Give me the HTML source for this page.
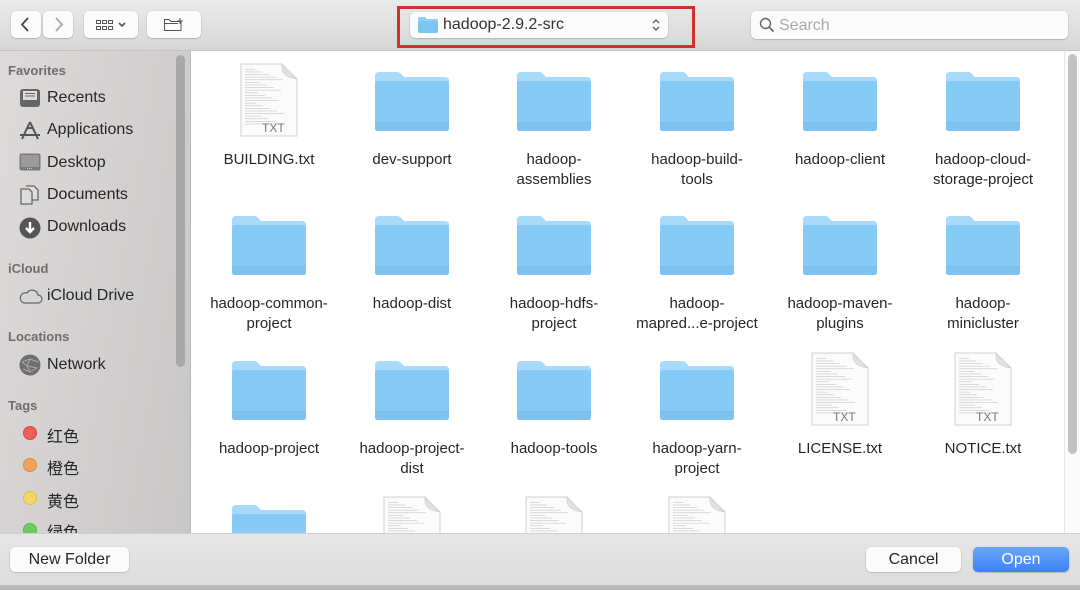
<!DOCTYPE html>
<html><head><meta charset="utf-8"><style>
*{margin:0;padding:0;box-sizing:border-box}
body{width:1080px;height:589px;overflow:hidden;position:relative;font-family:"Liberation Sans","Noto Sans CJK SC",sans-serif;background:#fff;color:#222}
.a{position:absolute}
#tb{left:0;top:0;width:1080px;height:51px;background:linear-gradient(#ebebeb,#d6d6d6);border-bottom:1px solid #c4c4c4}
.btn{position:absolute;background:#fbfbfb;border-radius:5px;box-shadow:0 0.5px 1.5px rgba(0,0,0,.3)}
#sb{left:0;top:51px;width:191px;height:482px;background:linear-gradient(100deg,#dddbda,#c9c7c6);border-right:1px solid #b8b8b8}
.sh{position:absolute;left:8px;font-size:13px;color:#6f6c6b;font-weight:bold}
.si{position:absolute;left:47px;font-size:16px;color:#262626}
.ic{position:absolute;left:19px}
#bb{left:0;top:533px;width:1080px;height:56px;background:linear-gradient(#e6e6e6,#dcdcdc);border-top:1px solid #cfcfcf}
.lbl{position:absolute;width:140px;text-align:center;font-size:15px;line-height:20px;color:#262626}
.dot{position:absolute;left:23px;width:14px;height:14px;border-radius:50%}
</style></head><body>
<div id="tb" class="a">
 <div class="btn" style="left:11px;top:11px;width:30px;height:27px"><svg width="30" height="27"><path d="M17 7 L11 13.5 L17 20" stroke="#444" stroke-width="1.8" fill="none"/></svg></div>
 <div class="btn" style="left:43px;top:11px;width:30px;height:27px"><svg width="30" height="27"><path d="M13 7 L19 13.5 L13 20" stroke="#aaa" stroke-width="1.8" fill="none"/></svg></div>
 <div class="btn" style="left:84px;top:11px;width:54px;height:27px"><svg width="54" height="27"><g fill="none" stroke="#555" stroke-width="1"><rect x="12.5" y="9.5" width="4" height="3"/><rect x="18.5" y="9.5" width="4" height="3"/><rect x="24.5" y="9.5" width="4" height="3"/><rect x="12.5" y="15.5" width="4" height="3"/><rect x="18.5" y="15.5" width="4" height="3"/><rect x="24.5" y="15.5" width="4" height="3"/><path d="M35 12 L38 15 L41 12" stroke-width="1.6"/></g></svg></div>
 <div class="btn" style="left:147px;top:11px;width:54px;height:27px"><svg width="54" height="27"><path d="M17.5 8.5 H22 L24 10.5 H34 V19.5 H17.5 Z M17.5 12.5 H31" stroke="#555" fill="none"/><path d="M33 7 V13 M30 10 H36" stroke="#555"/></svg></div>
 <div class="a" style="left:397px;top:6px;width:298px;height:42px;border:3px solid #d0312d"></div>
 <div class="btn" style="left:410px;top:12px;width:258px;height:26px">
  <svg class="a" style="left:8px;top:5px" width="20" height="16"><path d="M0 2 Q0 0 2 0 H7 L9 2 H18 Q20 2 20 4 V14 Q20 16 18 16 H2 Q0 16 0 14Z" fill="#8ecff5"/><rect x="0" y="4" width="20" height="12" rx="2" fill="#7cc4f2"/></svg>
  <span class="a" style="left:33px;top:4px;font-size:16px;color:#333">hadoop-2.9.2-src</span>
  <svg class="a" style="left:240px;top:5px" width="12" height="16"><path d="M3 6 L6 3 L9 6 M3 10 L6 13 L9 10" stroke="#555" fill="none" stroke-width="1.3"/></svg>
 </div>
 <div class="btn" style="left:751px;top:11px;width:317px;height:28px">
  <svg class="a" style="left:8px;top:6px" width="16" height="16"><circle cx="6.5" cy="6.5" r="5" stroke="#666" stroke-width="1.4" fill="none"/><path d="M10 10 L14.5 14.5" stroke="#666" stroke-width="1.6"/></svg>
  <span class="a" style="left:28px;top:6px;font-size:16px;color:#aaa">Search</span>
 </div>
</div>
<div id="sb" class="a">
 <div class="sh" style="top:12px">Favorites</div>
 <svg class="ic" style="top:37px" width="22" height="20"><rect x="1" y="1" width="20" height="18" rx="3" fill="#666"/><rect x="4" y="3" width="14" height="9" fill="#ddd"/><path d="M6 5.5H16M6 8H16" stroke="#666"/></svg><div class="si" style="top:38px">Recents</div>
 <svg class="ic" style="top:69px" width="22" height="22"><path d="M11 2 L3 19 M11 2 L19 19 M1 15 H21 M8 8 L14 8" stroke="#555" stroke-width="2" fill="none"/></svg><div class="si" style="top:70px">Applications</div>
 <svg class="ic" style="top:102px" width="22" height="19"><rect x="0.5" y="0.5" width="21" height="17" rx="2" fill="#7a7a7a"/><rect x="2" y="2" width="18" height="12" fill="#9a9a9a"/><path d="M8 15.5H14" stroke="#ccc" stroke-dasharray="1 1"/></svg><div class="si" style="top:103px">Desktop</div>
 <svg class="ic" style="top:133px" width="22" height="22"><path d="M2 5 H10 L13 8 V20 H2 Z M7 2 H15 L19 6 V16 H13" stroke="#666" fill="#ddd" stroke-width="1.3"/></svg><div class="si" style="top:135px">Documents</div>
 <svg class="ic" style="top:166px" width="22" height="22"><circle cx="11" cy="11" r="10.5" fill="#555"/><path d="M11 5 V15 M7 11 L11 15 L15 11" stroke="#fff" stroke-width="2.4" fill="none"/></svg><div class="si" style="top:167px">Downloads</div>
 <div class="sh" style="top:210px">iCloud</div>
 <svg class="ic" style="top:236px" width="24" height="18"><path d="M5 16 H19 A4 4 0 0 0 19 8 A6 6 0 0 0 8 6 A5 5 0 0 0 5 16Z" stroke="#666" fill="none" stroke-width="1.2"/></svg><div class="si" style="top:236px">iCloud Drive</div>
 <div class="sh" style="top:278px">Locations</div>
 <svg class="ic" style="top:303px" width="22" height="22"><circle cx="11" cy="11" r="10.5" fill="#6f6f6f"/><path d="M3 8 L11 5 L19 8 M4 15 L11 18 L18 14 M11 5 L8 12 L11 18 M8 12 L18 14 M8 12 L3 8" stroke="#aaa" fill="none"/></svg><div class="si" style="top:305px">Network</div>
 <div class="sh" style="top:347px">Tags</div>
 <div class="dot" style="top:375px;background:#ec6157;border:1px solid #d9473f"></div><div class="si" style="top:372px">红色</div>
 <div class="dot" style="top:407px;background:#f0a35a;border:1px solid #dc8c3e"></div><div class="si" style="top:404px">橙色</div>
 <div class="dot" style="top:440px;background:#f5d565;border:1px solid #e3bf46"></div><div class="si" style="top:437px">黄色</div>
 <div class="dot" style="top:472px;background:#6dcc5d;border:1px solid #55b846"></div><div class="si" style="top:468px">绿色</div>
 <div class="a" style="left:176px;top:4px;width:9px;height:312px;border-radius:5px;background:#a9a8a7"></div>
</div>
<div class="a" style="left:1064px;top:51px;width:16px;height:482px;background:#fafafa;border-left:1px solid #e6e6e6"><div class="a" style="left:3px;top:3px;width:9px;height:400px;border-radius:5px;background:#c2c2c2"></div></div>
<div id="grid"></div>
<div id="bb" class="a">
 <div class="btn" style="left:10px;top:13px;width:119px;height:25px;text-align:center;font-size:16px;line-height:25px;color:#262626">New Folder</div>
 <div class="btn" style="left:866px;top:13px;width:95px;height:25px;text-align:center;font-size:16px;line-height:25px;color:#262626">Cancel</div>
 <div class="btn" style="left:973px;top:13px;width:96px;height:25px;text-align:center;font-size:16px;line-height:25px;color:#fff;background:linear-gradient(#6aa6fb,#3b82f6)">Open</div>
 <div class="a" style="left:0;top:51px;width:1080px;height:5px;background:#b9b9b9"></div>
</div>
<script>
var F='<svg width="74" height="59"><path d="M0 4 Q0 0 4 0 H22 Q25 0 27 3 L29 5 H70 Q74 5 74 9 V55 Q74 59 70 59 H4 Q0 59 0 55Z" fill="#a8dafb"/><path d="M0 12 Q0 9 3 9 H71 Q74 9 74 12 V56 Q74 59 71 59 H3 Q0 59 0 56Z" fill="#85cbf6"/><rect x="0" y="50" width="74" height="1" fill="#78bdeb"/><path d="M0 51 H74 V56 Q74 59 71 59 H3 Q0 59 0 56Z" fill="#7ec2f0"/></svg>';
function D(){var l='';for(var i=0;i<22;i++){l+='<rect x="5" y="'+(6+i*2.6)+'" width="'+(10+((i*37)%30))+'" height="0.7" fill="#ccc"/>';}
return '<svg width="58" height="74"><path d="M1 1 H42 L57 16 V73 H1Z" fill="#fbfbfb" stroke="#d2d2d2"/>'+l+'<path d="M42 1 Q40 14 57 16 Q48 11 42 1Z" fill="#e3e3e3" stroke="#ccc" stroke-width=".6"/><text x="22" y="69" font-family="Liberation Sans" font-size="12" fill="#777">TXT</text></svg>';}
var items=[['d','BUILDING.txt'],['f','dev-support'],['f','hadoop-<br>assemblies'],['f','hadoop-build-<br>tools'],['f','hadoop-client'],['f','hadoop-cloud-<br>storage-project'],
['f','hadoop-common-<br>project'],['f','hadoop-dist'],['f','hadoop-hdfs-<br>project'],['f','hadoop-<br>mapred...e-project'],['f','hadoop-maven-<br>plugins'],['f','hadoop-<br>minicluster'],
['f','hadoop-project'],['f','hadoop-project-<br>dist'],['f','hadoop-tools'],['f','hadoop-yarn-<br>project'],['d','LICENSE.txt'],['d','NOTICE.txt'],
['f',''],['d',''],['d',''],['d','']];
var cx=[269,412,554,697,840,983],ry=[0,144,289,433],h='';
items.forEach(function(it,i){var c=i%6,r=Math.floor(i/6),y=ry[r];
if(it[0]=='f')h+='<div class="a" style="left:'+(cx[c]-37)+'px;top:'+(72+y)+'px">'+F+'</div>';
else h+='<div class="a" style="left:'+(cx[c]-29)+'px;top:'+(63+y)+'px">'+D()+'</div>';
if(it[1])h+='<div class="lbl" style="left:'+(cx[c]-70)+'px;top:'+(150+y)+'px">'+it[1]+'</div>';});
var g=document.getElementById('grid');g.className='a';g.style.cssText='left:0;top:0;width:1064px;height:533px;overflow:hidden;clip-path:inset(51px 0 0 192px)';g.innerHTML=h;
</script>
</body></html>
